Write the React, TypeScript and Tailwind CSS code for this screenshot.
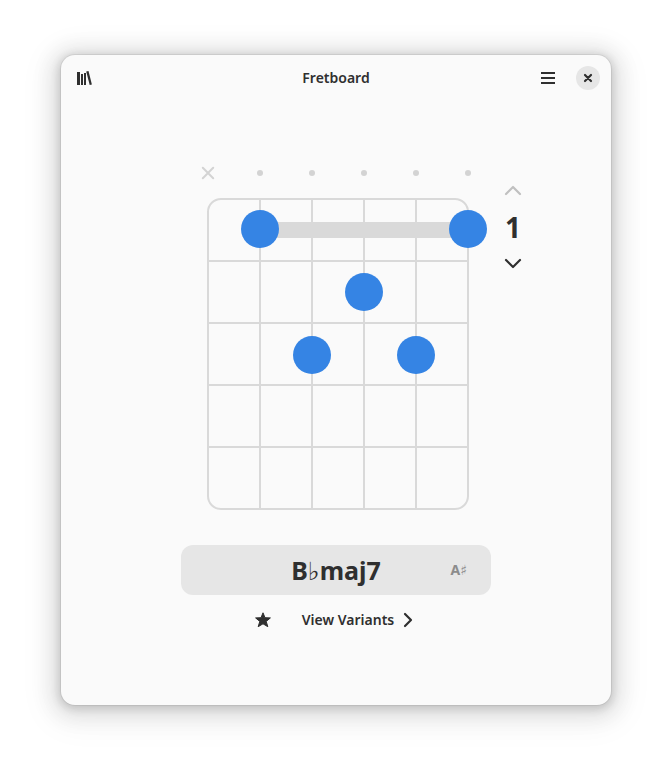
import { useState } from "react";

const STRING_GAP = 52;
const FRET_GAP = 62;
const LEFT = 26;
const TOP = 10;

const strings = [
  { name: "E", open: false },
  { name: "A", open: true },
  { name: "D", open: true },
  { name: "G", open: true },
  { name: "B", open: true },
  { name: "High E", open: true },
];

const fingers = [
  { string: 1, y: 40 },
  { string: 5, y: 40 },
  { string: 3, y: 103 },
  { string: 2, y: 166 },
  { string: 4, y: 166 },
];

function Chevron({ d }: { d: string }) {
  return (
    <svg width="20" height="20" viewBox="0 0 20 20" fill="none" stroke="currentColor" strokeWidth="2.2" strokeLinecap="round" strokeLinejoin="round" aria-hidden="true">
      <path d={d} />
    </svg>
  );
}

function HeaderBar() {
  return (
    <header className="grid h-[46px] grid-cols-[1fr_auto_1fr] items-center px-[7px]">
      <button type="button" aria-label="Library" className="flex h-8 w-8 items-center justify-center rounded-lg hover:bg-black/5">
        <svg width="16" height="16" viewBox="0 0 16 16" fill="currentColor" aria-hidden="true">
          <path d="M1 2h3v13H1zM5 4h2v11H5zM8 3h2v12H8z" />
          <path d="M10.2 1.6l2.3-.6 3.4 13.4-2.2.6z" />
        </svg>
      </button>
      <h1 className="text-sm font-semibold">Fretboard</h1>
      <div className="flex items-center justify-end gap-3">
        <button type="button" aria-label="Main menu" className="flex h-8 w-8 items-center justify-center rounded-lg hover:bg-black/5">
          <svg width="16" height="16" viewBox="0 0 16 16" fill="currentColor" aria-hidden="true">
            <path d="M1 2h14v2H1zM1 7h14v2H1zM1 12h14v2H1z" />
          </svg>
        </button>
        <button type="button" aria-label="Close" className="mr-1 flex h-6 w-6 items-center justify-center rounded-full bg-[#e6e6e6] hover:bg-[#dcdcdc]">
          <svg width="16" height="16" viewBox="0 0 16 16" stroke="currentColor" strokeWidth="2.2" strokeLinecap="round" aria-hidden="true">
            <path d="M5 5l6 6M11 5l-6 6" />
          </svg>
        </button>
      </div>
    </header>
  );
}

function StringToggles() {
  return (
    <div className="flex text-[#d3d3d3]">
      {strings.map((s) => (
        <button key={s.name} type="button" aria-label={`${s.name} string`} className="flex h-8 w-[52px] items-center justify-center">
          <svg width="16" height="16" viewBox="0 0 16 16" stroke="currentColor" strokeWidth="2" strokeLinecap="round" aria-hidden="true">
            {s.open ? (
              <circle cx="8" cy="8" r="3" fill="currentColor" stroke="none" />
            ) : (
              <path d="M2.8 2.8l10.4 10.4M13.2 2.8l-10.4 10.4" />
            )}
          </svg>
        </button>
      ))}
    </div>
  );
}

function Board() {
  return (
    <svg width="312" height="330" viewBox="0 0 312 330" role="img" aria-label="Chord diagram">
      <g fill="none" stroke="#d9d9d9" strokeWidth="2">
        <rect x={LEFT} y={TOP} width={STRING_GAP * 5} height={FRET_GAP * 5} rx="13" />
        {[1, 2, 3, 4].map((i) => (
          <path key={i} d={`M${LEFT + i * STRING_GAP} ${TOP}v${FRET_GAP * 5}M${LEFT} ${TOP + i * FRET_GAP}h${STRING_GAP * 5}`} />
        ))}
      </g>
      <rect x={LEFT + STRING_GAP} y="33" width={STRING_GAP * 4} height="16" fill="#d9d9d9" />
      {fingers.map((f) => (
        <circle key={f.string} cx={LEFT + f.string * STRING_GAP} cy={f.y} r="19" fill="#3584e4" />
      ))}
    </svg>
  );
}

function FretStepper() {
  const [fret, setFret] = useState(1);

  return (
    <div className="flex w-[34px] flex-col items-center pt-[17px]">
      <button type="button" aria-label="Previous fret" disabled={fret === 1} onClick={() => setFret(fret - 1)} className="flex h-8 w-8 items-center justify-center disabled:text-[#c0c0c0]">
        <Chevron d="M3 14l7-7 7 7" />
      </button>
      <output className="text-[28px] leading-[42px] font-bold">{fret}</output>
      <button type="button" aria-label="Next fret" onClick={() => setFret(fret + 1)} className="flex h-8 w-8 items-center justify-center">
        <Chevron d="M3 6l7 7 7-7" />
      </button>
    </div>
  );
}

export default function App() {
  const [chord, setChord] = useState("B♭maj7");

  return (
    <div className="flex min-h-screen bg-white px-[61px] pt-[55px] pb-[67px] font-['Noto_Sans','DejaVu_Sans',sans-serif] text-[#2f2f2f]">
      <div className="flex flex-1 flex-col rounded-[14px] bg-[#fafafa] shadow-[0_0_0_1px_rgba(0,0,0,0.06),0_2px_8px_2px_rgba(0,0,0,0.14),0_3px_20px_10px_rgba(0,0,0,0.09),0_6px_32px_16px_rgba(0,0,0,0.04)]">
        <HeaderBar />
        <main className="flex flex-1 flex-col items-center pt-14">
          <div className="grid grid-cols-[1fr_auto_1fr] pl-1">
            <div />
            <div>
              <StringToggles />
              <Board />
            </div>
            <div className="pl-0.5">
              <FretStepper />
            </div>
          </div>
          <div className="relative mt-[26px] w-[310px]">
            <input
              type="text"
              aria-label="Chord name"
              value={chord}
              onChange={(e) => setChord(e.target.value)}
              className="h-[50px] w-full rounded-xl bg-[#e6e6e6] text-center text-[25px] font-bold outline-none"
            />
            <span className="absolute inset-y-0 right-6 flex items-center text-sm font-bold text-[#8c8c8c]">A♯</span>
          </div>
          <div className="mt-2 flex items-center gap-3.5">
            <button type="button" aria-label="Bookmark chord" className="flex h-[34px] w-[34px] items-center justify-center rounded-lg hover:bg-black/5">
              <svg width="16" height="16" viewBox="0 0 16 16" fill="currentColor" stroke="currentColor" strokeLinejoin="round" aria-hidden="true">
                <path d="M8 .8l2 4.9 5.4.2-4.2 3.5 1.6 5.3L8 11.8l-4.8 2.9 1.6-5.3L.6 5.9 6 5.7z" />
              </svg>
            </button>
            <button type="button" className="flex h-[34px] items-center gap-1 rounded-lg px-2 text-sm font-semibold hover:bg-black/5">
              View Variants
              <Chevron d="M7 4l6 6-6 6" />
            </button>
          </div>
        </main>
      </div>
    </div>
  );
}
